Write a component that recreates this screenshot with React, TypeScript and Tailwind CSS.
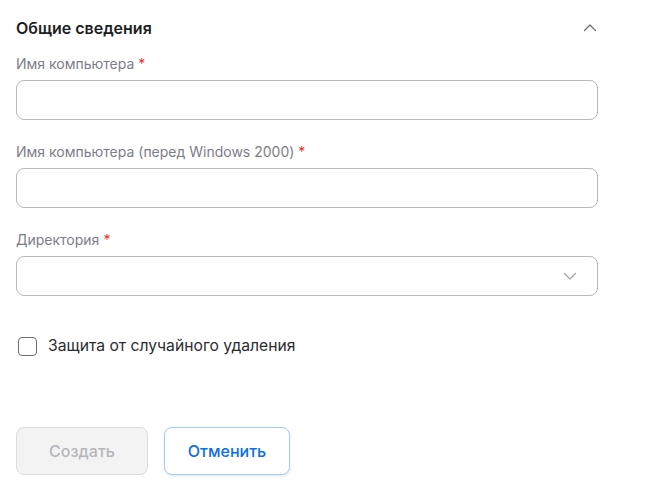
import React from 'react';

const Label = ({ text }: { text: string }) => (
  <div className="h-5 flex items-center text-[14px] leading-5 text-[#7d7d86]">
    {text}
    <span className="ml-1 text-[#e5322d]">*</span>
  </div>
);

const Input = () => (
  <div className="h-10 w-full rounded-lg border border-[#b9b9c0] bg-white" />
);

export default function App() {
  return (
    <div className="min-h-[483px] w-[670px] bg-white font-['Inter','Liberation_Sans',sans-serif]">
      <div className="ml-4 w-[582px] pt-4">
        {/* Section header */}
        <div className="flex h-6 items-center justify-between">
          <h2 className="text-[16px] font-semibold leading-6 text-[#1e1e22]">Общие сведения</h2>
          <svg width="14" height="14" viewBox="0 0 14 14" className="mr-[1px]" fill="none">
            <path d="M1.5 9.5L7 4L12.5 9.5" stroke="#6e6e78" strokeWidth="1.3" strokeLinecap="round" strokeLinejoin="round" />
          </svg>
        </div>

        <div className="mt-[14px]">
          <Label text="Имя компьютера" />
          <div className="mt-[6px]"><Input /></div>
        </div>

        <div className="mt-[22px]">
          <Label text="Имя компьютера (перед Windows 2000)" />
          <div className="mt-[6px]"><Input /></div>
        </div>

        <div className="mt-[22px]">
          <Label text="Директория" />
          <div className="mt-[6px] flex h-10 w-full items-center justify-end rounded-lg border border-[#b9b9c0] bg-white pr-5">
            <svg width="14" height="14" viewBox="0 0 14 14" fill="none">
              <path d="M1.5 4.5L7 10L12.5 4.5" stroke="#a4a4ac" strokeWidth="1.3" strokeLinecap="round" strokeLinejoin="round" />
            </svg>
          </div>
        </div>

        {/* Checkbox */}
        <label className="mt-[38px] flex h-6 items-center gap-[11px] pl-[2px]">
          <span className="h-[19px] w-[19px] rounded-[4px] border-[1.5px] border-[#6c6c74] bg-white" />
          <span className="text-[15.7px] leading-6 text-[#2b2b30]">Защита от случайного удаления</span>
        </label>

        {/* Actions */}
        <div className="mt-[69px] flex gap-4">
          <button className="h-12 w-[132px] rounded-lg border border-[#dcdcdf] bg-[#f3f3f4] text-[16px] font-medium text-[#b5b5ba]">
            Создать
          </button>
          <button className="h-12 w-[126px] rounded-lg border border-[#a9c9f7] bg-white text-[16px] font-medium text-[#0b6ee6] shadow-[0_1px_3px_rgba(40,100,200,0.15)]">
            Отменить
          </button>
        </div>
      </div>
    </div>
  );
}
